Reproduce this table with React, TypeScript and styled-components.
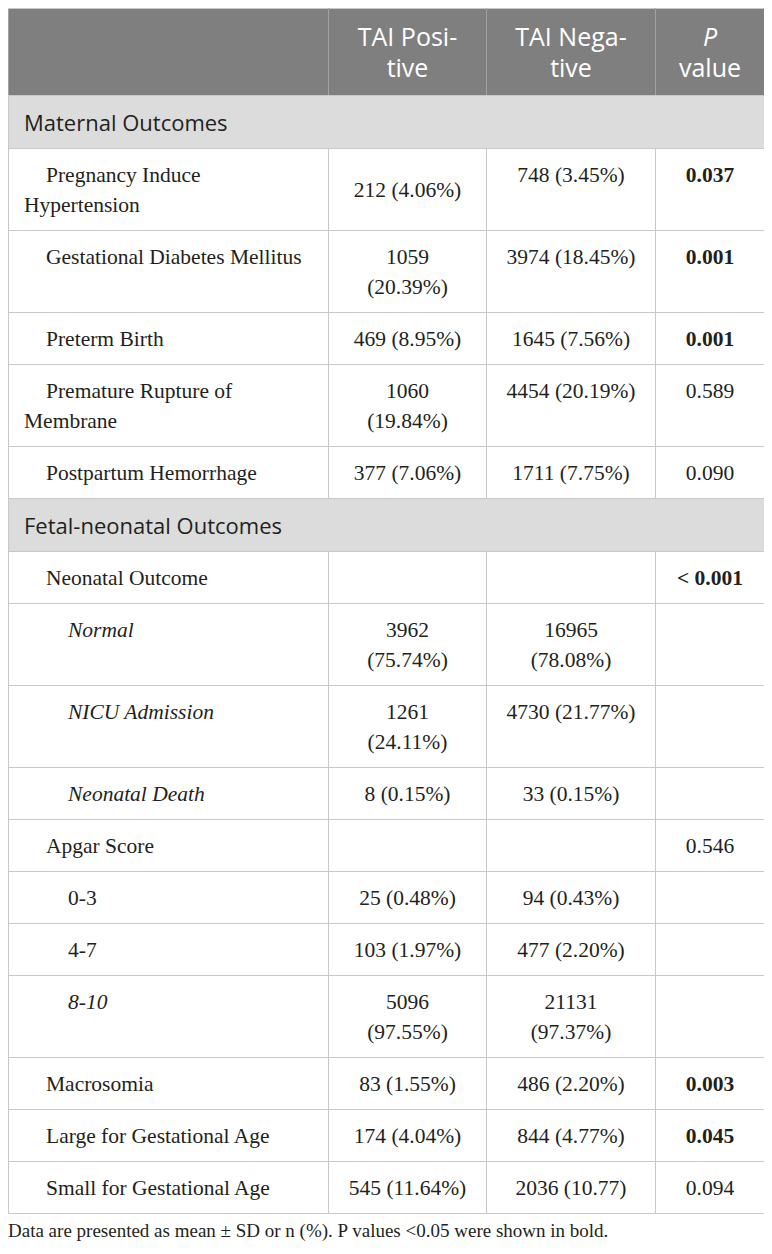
import React from "react";
import styled, { createGlobalStyle } from "styled-components";

const GlobalStyle = createGlobalStyle`
  body {
    margin: 8px;
    background: #ffffff;
    color: #231f20;
  }
`;

const Table = styled.table`
  width: 756px;
  border-collapse: collapse;
  table-layout: fixed;
`;

const Col = styled.col<{ $w: number }>`
  width: ${(p) => p.$w}px;
`;

const HeadCell = styled.th`
  background: #7f7f7f;
  color: #ffffff;
  font-family: "Open Sans", "DejaVu Sans", sans-serif;
  font-size: 25px;
  font-weight: 400;
  line-height: 31px;
  padding: 12px 15px;
  text-align: center;
  vertical-align: middle;
  border: 1px solid #c8c8c8;
  border-left-color: #a2a2a2;
  border-right-color: #a2a2a2;
  em {
    font-style: italic;
  }
`;

const SectionCell = styled.td`
  background: #dcdcdc;
  font-family: "Open Sans", "DejaVu Sans", sans-serif;
  font-size: 22px;
  line-height: 30px;
  padding: 11px 15px 11px;
  border: 1px solid #c8c8c8;
  color: #231f20;
`;

const BodyCell = styled.td`
  font-family: "Liberation Serif", "Times New Roman", serif;
  font-size: 21.5px;
  line-height: 30px;
  padding: 11px 17px 10px;
  border: 1px solid #c8c8c8;
  color: #231f20;
`;

const LabelCell = styled(BodyCell)<{ $level: number; $italic?: boolean }>`
  padding-left: 15px;
  padding-right: 15px;
  text-indent: ${(p) => p.$level * 22}px;
  font-style: ${(p) => (p.$italic ? "italic" : "normal")};
  vertical-align: top;
  text-align: left;
`;

const ValueCell = styled(BodyCell)<{ $middle?: boolean }>`
  text-align: center;
  vertical-align: ${(p) => (p.$middle ? "middle" : "top")};
`;

const PCell = styled(BodyCell)<{ $bold?: boolean }>`
  text-align: center;
  vertical-align: top;
  padding-left: 12px;
  padding-right: 12px;
  font-weight: ${(p) => (p.$bold ? 700 : 400)};
`;

const Footnote = styled.p`
  margin: 4px 0 0;
  font-family: "Liberation Serif", "Times New Roman", serif;
  font-size: 19px;
  line-height: 26px;
  color: #231f20;
`;

type Row =
  | { kind: "section"; title: string }
  | {
      kind: "item";
      label: string;
      level: number;
      italic?: boolean;
      pos: string;
      neg: string;
      p: string;
      bold?: boolean;
    };

const rows: Row[] = [
  { kind: "section", title: "Maternal Outcomes" },
  { kind: "item", label: "Pregnancy Induce Hypertension", level: 1, pos: "212 (4.06%)", neg: "748 (3.45%)", p: "0.037", bold: true },
  { kind: "item", label: "Gestational Diabetes Mellitus", level: 1, pos: "1059 (20.39%)", neg: "3974 (18.45%)", p: "0.001", bold: true },
  { kind: "item", label: "Preterm Birth", level: 1, pos: "469 (8.95%)", neg: "1645 (7.56%)", p: "0.001", bold: true },
  { kind: "item", label: "Premature Rupture of Membrane", level: 1, pos: "1060 (19.84%)", neg: "4454 (20.19%)", p: "0.589" },
  { kind: "item", label: "Postpartum Hemorrhage", level: 1, pos: "377 (7.06%)", neg: "1711 (7.75%)", p: "0.090" },
  { kind: "section", title: "Fetal-neonatal Outcomes" },
  { kind: "item", label: "Neonatal Outcome", level: 1, pos: "", neg: "", p: "< 0.001", bold: true },
  { kind: "item", label: "Normal", level: 2, italic: true, pos: "3962 (75.74%)", neg: "16965 (78.08%)", p: "" },
  { kind: "item", label: "NICU Admission", level: 2, italic: true, pos: "1261 (24.11%)", neg: "4730 (21.77%)", p: "" },
  { kind: "item", label: "Neonatal Death", level: 2, italic: true, pos: "8 (0.15%)", neg: "33 (0.15%)", p: "" },
  { kind: "item", label: "Apgar Score", level: 1, pos: "", neg: "", p: "0.546" },
  { kind: "item", label: "0-3", level: 2, pos: "25 (0.48%)", neg: "94 (0.43%)", p: "" },
  { kind: "item", label: "4-7", level: 2, pos: "103 (1.97%)", neg: "477 (2.20%)", p: "" },
  { kind: "item", label: "8-10", level: 2, italic: true, pos: "5096 (97.55%)", neg: "21131 (97.37%)", p: "" },
  { kind: "item", label: "Macrosomia", level: 1, pos: "83 (1.55%)", neg: "486 (2.20%)", p: "0.003", bold: true },
  { kind: "item", label: "Large for Gestational Age", level: 1, pos: "174 (4.04%)", neg: "844 (4.77%)", p: "0.045", bold: true },
  { kind: "item", label: "Small for Gestational Age", level: 1, pos: "545 (11.64%)", neg: "2036 (10.77)", p: "0.094" },
];

export default function App() {
  return (
    <>
      <GlobalStyle />
      <Table>
        <colgroup>
          <Col $w={320} />
          <Col $w={158} />
          <Col $w={169} />
          <Col $w={109} />
        </colgroup>
        <thead>
          <tr>
            <HeadCell />
            <HeadCell>
              TAI Posi-
              <br />
              tive
            </HeadCell>
            <HeadCell>
              TAI Nega-
              <br />
              tive
            </HeadCell>
            <HeadCell>
              <em>P</em>
              <br />
              value
            </HeadCell>
          </tr>
        </thead>
        <tbody>
          {rows.map((r, i) =>
            r.kind === "section" ? (
              <tr key={i}>
                <SectionCell colSpan={4}>{r.title}</SectionCell>
              </tr>
            ) : (
              <tr key={i}>
                <LabelCell $level={r.level} $italic={r.italic}>
                  {r.label}
                </LabelCell>
                <ValueCell $middle>{r.pos}</ValueCell>
                <ValueCell>{r.neg}</ValueCell>
                <PCell $bold={r.bold}>{r.p}</PCell>
              </tr>
            )
          )}
        </tbody>
      </Table>
      <Footnote>
        Data are presented as mean ± SD or n (%). P values &lt;0.05 were shown in bold.
      </Footnote>
    </>
  );
}
